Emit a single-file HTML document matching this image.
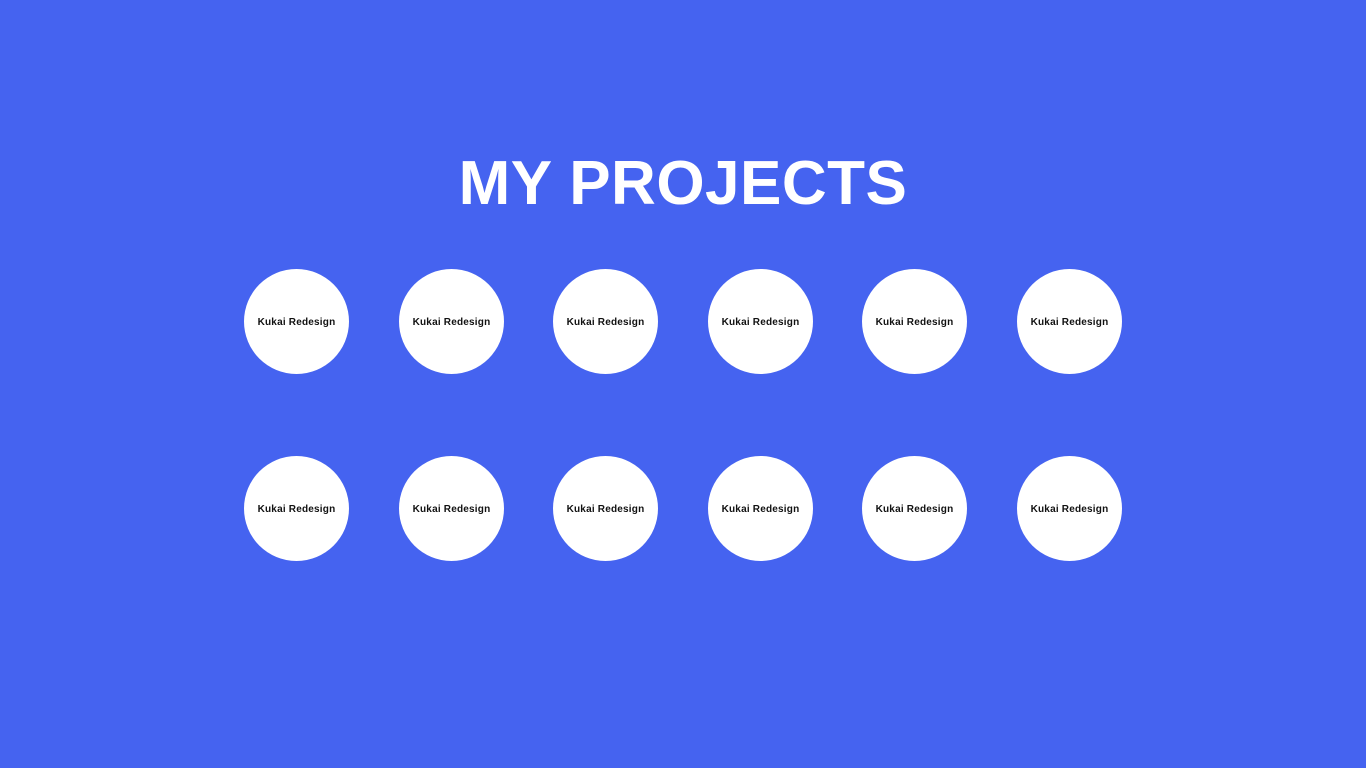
<!DOCTYPE html>
<html><head><meta charset="utf-8"><style>
html,body{margin:0;padding:0;}
body{width:1366px;height:768px;background:#4563f0;position:relative;overflow:hidden;font-family:"Liberation Sans",sans-serif;}
h1{position:absolute;left:0;width:1366px;top:153px;margin:0;text-align:center;color:#fff;font-size:62px;line-height:62px;font-weight:bold;letter-spacing:0.5px;}
.c{position:absolute;width:105px;height:105px;border-radius:50%;background:#fff;display:flex;align-items:center;justify-content:center;font-size:10px;font-weight:bold;color:#111;letter-spacing:0.2px;white-space:nowrap;padding-top:2px;box-sizing:border-box;}
</style></head><body>
<h1>MY PROJECTS</h1>
<div class="c" style="left:244px;top:269px">Kukai Redesign</div>
<div class="c" style="left:399px;top:269px">Kukai Redesign</div>
<div class="c" style="left:553px;top:269px">Kukai Redesign</div>
<div class="c" style="left:708px;top:269px">Kukai Redesign</div>
<div class="c" style="left:862px;top:269px">Kukai Redesign</div>
<div class="c" style="left:1017px;top:269px">Kukai Redesign</div>
<div class="c" style="left:244px;top:456px">Kukai Redesign</div>
<div class="c" style="left:399px;top:456px">Kukai Redesign</div>
<div class="c" style="left:553px;top:456px">Kukai Redesign</div>
<div class="c" style="left:708px;top:456px">Kukai Redesign</div>
<div class="c" style="left:862px;top:456px">Kukai Redesign</div>
<div class="c" style="left:1017px;top:456px">Kukai Redesign</div>
</body></html>
